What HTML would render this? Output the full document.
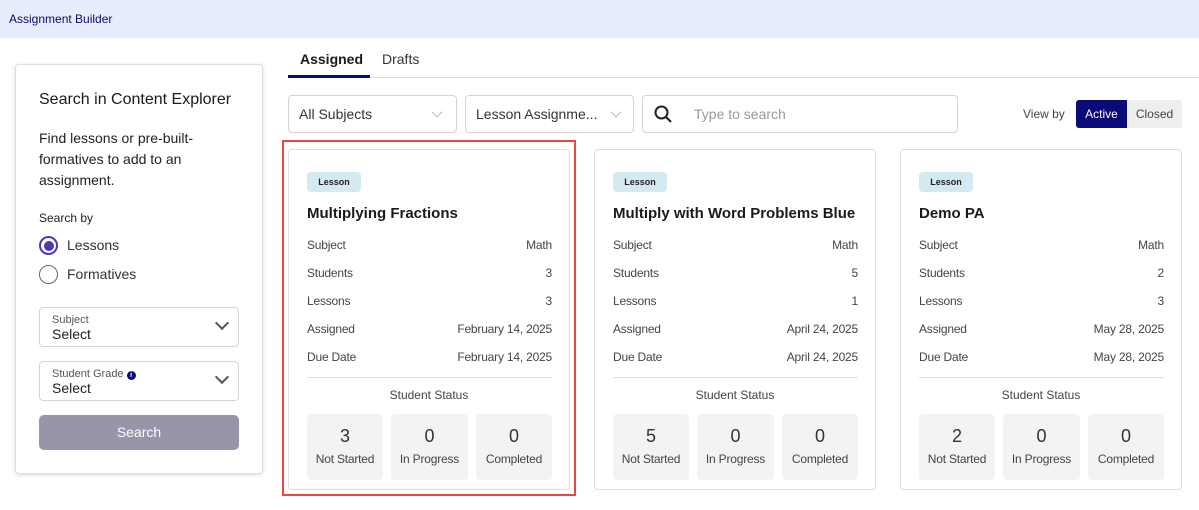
<!DOCTYPE html>
<html><head><style>
*{box-sizing:border-box;margin:0;padding:0}
body{width:1199px;height:510px;background:#fff;font-family:"Liberation Sans",sans-serif;color:#222;position:relative;overflow:hidden}
.a{position:absolute}
.hdr{left:0;top:0;width:1199px;height:38px;background:#e7edfc}
.panel{left:15px;top:64px;width:248px;height:410px;border:1px solid #ddd;border-radius:4px;box-shadow:0 1px 4px rgba(0,0,0,.15)}
.sel{border:1px solid #d4d4d4;border-radius:4px;background:#fff}
.chev{width:10px;height:10px;border-right:2px solid #555;border-bottom:2px solid #555;transform:rotate(45deg)}
.chev.l{border-color:#bbb;width:8px;height:8px;border-width:0 1.5px 1.5px 0}
.card{width:282px;height:341px;top:149px;border:1px solid #ddd;border-radius:4px;background:#fff}
.badge{left:18px;top:22px;width:54px;height:20px;background:#d3eaf0;border-radius:4px;font-size:9px;font-weight:bold;text-align:center;line-height:20px}
.title{left:18px;top:55px;font-size:15px;font-weight:bold;color:#1a1a1a;white-space:nowrap}
.row{left:18px;width:245px;font-size:12px;color:#444;display:flex;justify-content:space-between;letter-spacing:-0.2px}
.div{left:18px;width:245px;top:227px;height:1px;background:#ddd}
.ss{left:0;width:280px;top:238px;text-align:center;font-size:12px;color:#444}
.box{top:264px;height:66px;background:#f3f3f5;border-radius:4px;text-align:center}
.box b{display:block;font-size:18px;margin-top:12px;color:#333;font-weight:normal}
.box span{display:block;font-size:12px;color:#444;margin-top:5px;letter-spacing:-0.2px}
</style></head><body>
<div class="a hdr"><div class="a" style="left:9px;top:12px;font-size:12px;color:#0b0b6b">Assignment Builder</div></div>

<div class="a panel">
 <div class="a" style="left:23px;top:26px;font-size:16px;color:#1a1a1a">Search in Content Explorer</div>
 <div class="a" style="left:23px;top:63px;font-size:14px;line-height:21px;width:190px;color:#222">Find lessons or pre-built-formatives to add to an assignment.</div>
 <div class="a" style="left:23px;top:146px;font-size:12px;color:#222">Search by</div>
 <div class="a" style="left:23px;top:171px;width:19px;height:19px;border:2px solid #4a3ab8;border-radius:50%"><div class="a" style="left:2.5px;top:2.5px;width:10px;height:10px;border-radius:50%;background:#4a3ab8"></div></div>
 <div class="a" style="left:51px;top:172px;font-size:14px;color:#333">Lessons</div>
 <div class="a" style="left:23px;top:200px;width:19px;height:19px;border:1.5px solid #666;border-radius:50%"></div>
 <div class="a" style="left:51px;top:201px;font-size:14px;color:#333">Formatives</div>
 <div class="a sel" style="left:23px;top:242px;width:200px;height:40px">
  <div class="a" style="left:12px;top:6px;font-size:11px;color:#555">Subject</div>
  <div class="a" style="left:12px;top:18px;font-size:14px;color:#222">Select</div>
  <div class="a chev" style="left:177px;top:10px"></div></div>
 <div class="a sel" style="left:23px;top:296px;width:200px;height:40px">
  <div class="a" style="left:12px;top:6px;font-size:11px;color:#555">Student Grade <span style="display:inline-block;width:9px;height:9px;border-radius:50%;background:#0a0a78;color:#fff;font-size:7px;text-align:center;line-height:9px;font-weight:bold">i</span></div>
  <div class="a" style="left:12px;top:18px;font-size:14px;color:#222">Select</div>
  <div class="a chev" style="left:177px;top:10px"></div></div>
 <div class="a" style="left:23px;top:350px;width:200px;height:35px;background:#9795a8;border-radius:5px;color:#fff;font-size:14px;text-align:center;line-height:35px">Search</div>
</div>

<div class="a" style="left:300px;top:51px;font-size:14px;font-weight:bold;color:#1a1a1a">Assigned</div>
<div class="a" style="left:382px;top:51px;font-size:14px;color:#333">Drafts</div>
<div class="a" style="left:288px;top:77px;width:911px;height:1px;background:#ddd"></div>
<div class="a" style="left:288px;top:75px;width:82px;height:3px;background:#0a0a78"></div>

<div class="a sel" style="left:288px;top:95px;width:169px;height:38px"><div class="a" style="left:10px;top:10px;font-size:14px;color:#333">All Subjects</div><div class="a chev l" style="left:144px;top:12px"></div></div>
<div class="a sel" style="left:465px;top:95px;width:169px;height:38px"><div class="a" style="left:10px;top:10px;font-size:14px;color:#333">Lesson Assignme...</div><div class="a chev l" style="left:146px;top:12px"></div></div>
<div class="a sel" style="left:642px;top:95px;width:316px;height:38px">
 <svg class="a" style="left:11px;top:9px" width="18" height="18" viewBox="0 0 18 18"><circle cx="7.5" cy="7.5" r="6" fill="none" stroke="#222" stroke-width="2"/><path d="M12 12l5 5" stroke="#222" stroke-width="2"/></svg>
 <div class="a" style="left:51px;top:10px;font-size:14px;color:#999">Type to search</div></div>
<div class="a" style="left:1023px;top:107px;font-size:12px;color:#444">View by</div>
<div class="a" style="left:1076px;top:100px;width:51px;height:28px;background:#0a0a78;border-radius:3px 0 0 3px;color:#fff;font-size:12px;text-align:center;line-height:28px">Active</div>
<div class="a" style="left:1127px;top:100px;width:55px;height:28px;background:#eee;border-radius:0 3px 3px 0;color:#444;font-size:12px;text-align:center;line-height:28px">Closed</div>

<div class="a" style="left:282px;top:140px;width:294px;height:356px;border:2.5px solid #ee4444"></div>

<div class="a card" style="left:288px">
 <div class="a badge">Lesson</div><div class="a title">Multiplying Fractions</div>
 <div class="a row" style="top:88px"><span>Subject</span><span>Math</span></div>
 <div class="a row" style="top:116px"><span>Students</span><span>3</span></div>
 <div class="a row" style="top:144px"><span>Lessons</span><span>3</span></div>
 <div class="a row" style="top:172px"><span>Assigned</span><span>February 14, 2025</span></div>
 <div class="a row" style="top:200px"><span>Due Date</span><span>February 14, 2025</span></div>
 <div class="a div"></div><div class="a ss">Student Status</div>
 <div class="a box" style="left:18px;width:76px"><b>3</b><span>Not Started</span></div>
 <div class="a box" style="left:102px;width:77px"><b>0</b><span>In Progress</span></div>
 <div class="a box" style="left:187px;width:76px"><b>0</b><span>Completed</span></div>
</div>
<div class="a card" style="left:594px">
 <div class="a badge">Lesson</div><div class="a title">Multiply with Word Problems Blue</div>
 <div class="a row" style="top:88px"><span>Subject</span><span>Math</span></div>
 <div class="a row" style="top:116px"><span>Students</span><span>5</span></div>
 <div class="a row" style="top:144px"><span>Lessons</span><span>1</span></div>
 <div class="a row" style="top:172px"><span>Assigned</span><span>April 24, 2025</span></div>
 <div class="a row" style="top:200px"><span>Due Date</span><span>April 24, 2025</span></div>
 <div class="a div"></div><div class="a ss">Student Status</div>
 <div class="a box" style="left:18px;width:76px"><b>5</b><span>Not Started</span></div>
 <div class="a box" style="left:102px;width:77px"><b>0</b><span>In Progress</span></div>
 <div class="a box" style="left:187px;width:76px"><b>0</b><span>Completed</span></div>
</div>
<div class="a card" style="left:900px">
 <div class="a badge">Lesson</div><div class="a title">Demo PA</div>
 <div class="a row" style="top:88px"><span>Subject</span><span>Math</span></div>
 <div class="a row" style="top:116px"><span>Students</span><span>2</span></div>
 <div class="a row" style="top:144px"><span>Lessons</span><span>3</span></div>
 <div class="a row" style="top:172px"><span>Assigned</span><span>May 28, 2025</span></div>
 <div class="a row" style="top:200px"><span>Due Date</span><span>May 28, 2025</span></div>
 <div class="a div"></div><div class="a ss">Student Status</div>
 <div class="a box" style="left:18px;width:76px"><b>2</b><span>Not Started</span></div>
 <div class="a box" style="left:102px;width:77px"><b>0</b><span>In Progress</span></div>
 <div class="a box" style="left:187px;width:76px"><b>0</b><span>Completed</span></div>
</div>
</body></html>
